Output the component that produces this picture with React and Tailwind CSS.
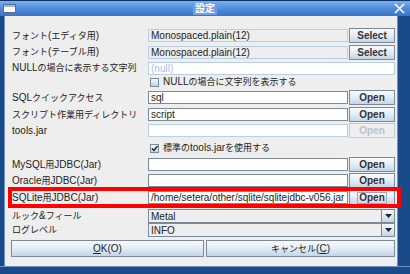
import React from "react";

const CJK = /([\u3000-\u9fff\uff00-\uffef]+)/;

function Mixed({ text }) {
  return text.split(CJK).map((part, i) =>
    CJK.test(part) ? (
      <span key={i} className="text-[9px]">
        {part}
      </span>
    ) : (
      <span key={i}>{part}</span>
    )
  );
}

function Button({ children, disabled, focused, className = "" }) {
  if (disabled) {
    return (
      <div className={`flex h-[15px] items-center justify-center border border-[#b8cfe5] bg-[#eeeeee] font-bold text-[#b8c4d0] ${className}`}>
        {children}
      </div>
    );
  }
  return (
    <div className={`flex h-[15px] items-center justify-center border border-[#7a8a99] bg-gradient-to-b from-[#f7fafd] via-[#e3ecf5] to-[#c3d5e8] font-bold text-[#333] ${className}`}>
      {focused ? (
        <span className="border border-[#99aabb] px-[1px] leading-[10px]">{children}</span>
      ) : (
        children
      )}
    </div>
  );
}

function Field({ value, variant = "edit", className = "" }) {
  const styles = {
    edit: "bg-white border-[#7a8a99] text-[#222]",
    readonly: "bg-[#eeeeee] border-[#b8cfe5] text-[#222]",
    hint: "bg-white border-[#b8cfe5] text-[#a9c0dc]",
    disabled: "bg-white border-[#b8cfe5] text-[#222]",
  };
  return (
    <div className={`flex h-[13px] items-center overflow-hidden whitespace-nowrap border px-[2px] ${styles[variant]} ${className}`}>
      {value}
    </div>
  );
}

function Row({ label, h, children }) {
  return (
    <div className={`flex items-center ${h}`}>
      <div className="w-[136px] whitespace-nowrap">
        <Mixed text={label} />
      </div>
      <div className="flex w-[247px] items-center gap-[1px]">{children}</div>
    </div>
  );
}

function CheckRow({ label, checked, h }) {
  return (
    <div className={`flex items-center ${h}`}>
      <div className="w-[138px]" />
      <div className="flex h-[9px] w-[9px] items-center justify-center border border-[#7a8a99] bg-gradient-to-b from-[#f4f8fb] to-[#c3d5e8]">
        {checked && (
          <svg width="7" height="7" viewBox="0 0 7 7">
            <path d="M1 3.5 L3 5.5 L6.5 1" stroke="#222" strokeWidth="1.4" fill="none" />
          </svg>
        )}
      </div>
      <div className="ml-[4px] whitespace-nowrap">
        <Mixed text={label} />
      </div>
    </div>
  );
}

function Combo({ value }) {
  return (
    <div className="flex h-[14px] w-[247px] border border-[#7a8a99]">
      <div className="flex flex-1 items-center bg-[#eeeeee] px-[2px]">{value}</div>
      <div className="flex w-[13px] items-center justify-center border-l border-[#7a8a99] bg-gradient-to-b from-[#f7fafd] to-[#c3d5e8]">
        <svg width="7" height="4" viewBox="0 0 7 4">
          <path d="M0 0 H7 L3.5 4 Z" fill="#222" />
        </svg>
      </div>
    </div>
  );
}

export default function App() {
  return (
    <div className="relative flex h-[274px] w-[410px] flex-col overflow-hidden bg-[#1a4a8a] font-['Liberation_Sans','Noto_Sans_CJK_JP',sans-serif] text-[10px] text-[#222]">
      {/* title bar */}
      <div className="relative flex h-[16px] shrink-0 items-center justify-center border-t border-[#0c3268] bg-gradient-to-b from-[#7cb0ec] via-[#4f8cdb] to-[#3a74c6]">
        <div className="absolute left-[3px] top-[3px] h-[9px] w-[13px] border border-[#5a6f8a] bg-white">
          <div className="h-[2px] bg-[#9fb8d8]" />
        </div>
        <span className="bg-[#66a0e6] px-[2px] text-[10px] font-bold leading-[12px] text-white">
          設定
        </span>
        <svg className="absolute right-[5px] top-[2px]" width="11" height="11" viewBox="0 0 11 11">
          <path d="M1 1 L10 10 M10 1 L1 10" stroke="white" strokeWidth="1.6" />
        </svg>
      </div>

      <div className="flex flex-1">
        <div className="w-[5px] border-r border-[#6d93c4]" />
        <div className="flex w-[392px] flex-col bg-[#eeeeee] pl-[7px] pt-[11px]">
          <Row label="フォント(エディタ用)" h="h-[17px]">
            <Field value="Monospaced.plain(12)" variant="readonly" className="flex-1" />
            <Button className="w-[46px]">Select</Button>
          </Row>
          <Row label="フォント(テーブル用)" h="h-[16px]">
            <Field value="Monospaced.plain(12)" variant="readonly" className="flex-1" />
            <Button className="w-[46px]">Select</Button>
          </Row>
          <Row label="NULLの場合に表示する文字列" h="h-[16px]">
            <Field value="(null)" variant="hint" className="flex-1" />
          </Row>
          <CheckRow label="NULLの場合に文字列を表示する" h="h-[12px]" />
          <Row label="SQLクイックアクセス" h="h-[19px]">
            <Field value="sql" className="flex-1" />
            <Button className="w-[46px]">Open</Button>
          </Row>
          <Row label="スクリプト作業用ディレクトリ" h="h-[15px]">
            <Field value="script" className="flex-1" />
            <Button className="w-[46px]">Open</Button>
          </Row>
          <Row label="tools.jar" h="h-[17px]">
            <Field value="" variant="disabled" className="flex-1" />
            <Button className="w-[46px]" disabled>
              Open
            </Button>
          </Row>
          <CheckRow label="標準のtools.jarを使用する" checked h="h-[18px]" />
          <Row label="MySQL用JDBC(Jar)" h="h-[15px]">
            <Field value="" className="flex-1" />
            <Button className="w-[46px]">Open</Button>
          </Row>
          <Row label="Oracle用JDBC(Jar)" h="h-[17px]">
            <Field value="" className="flex-1" />
            <Button className="w-[46px]">Open</Button>
          </Row>
          <Row label="SQLite用JDBC(Jar)" h="h-[17px]">
            <Field value="/home/setera/other/sqlite/sqlitejdbc-v056.jar" className="flex-1" />
            <Button className="w-[46px]" focused>
              Open
            </Button>
          </Row>
          <div className="mt-[3px] flex h-[14px] items-center">
            <div className="w-[136px] whitespace-nowrap">
              <Mixed text="ルック&フィール" />
            </div>
            <Combo value="Metal" />
          </div>
          <div className="flex h-[14px] items-center">
            <div className="w-[136px] whitespace-nowrap">
              <Mixed text="ログレベル" />
            </div>
            <Combo value="INFO" />
          </div>
          <div className="-ml-[1px] mt-[3px] flex h-[17px] gap-[2px]">
            <div className="flex w-[193px] items-center justify-center border border-[#7a8a99] bg-gradient-to-b from-[#f7fafd] via-[#e3ecf5] to-[#c3d5e8]">
              <span>
                <span className="underline">O</span>K(O)
              </span>
            </div>
            <div className="flex w-[189px] items-center justify-center border border-[#7a8a99] bg-gradient-to-b from-[#f7fafd] via-[#e3ecf5] to-[#c3d5e8]">
              <span>
                <span className="text-[9px]">キャンセル</span>(<span className="underline">C</span>)
              </span>
            </div>
          </div>
        </div>
        <div className="flex-1 border-l border-[#6d93c4]" />
      </div>
      <div className="h-[8px] shrink-0 border-t border-[#6d93c4]" />

      {/* annotation highlight */}
      <div className="absolute left-[8px] top-[187px] h-[21px] w-[393px] border-[4px] border-[#ff0000]" />
    </div>
  );
}
